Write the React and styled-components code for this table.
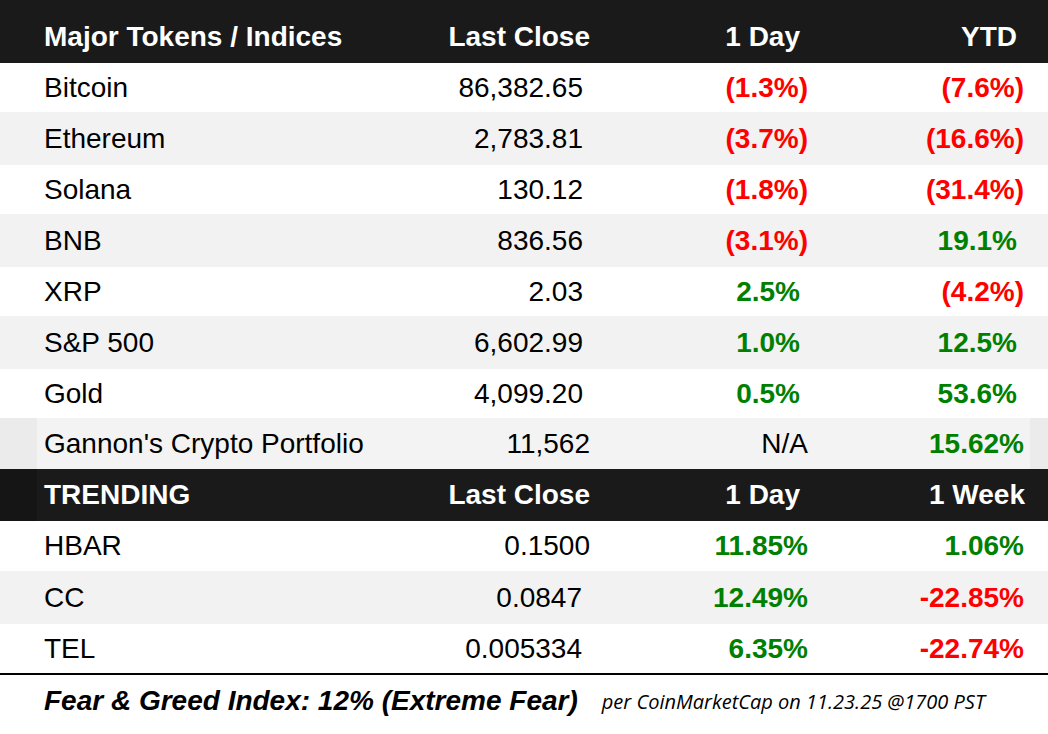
import React from "react";
import styled, { createGlobalStyle } from "styled-components";

const Global = createGlobalStyle`
  html, body { margin: 0; padding: 0; background: #ffffff; }
  body { font-family: "Liberation Sans", Arial, Helvetica, sans-serif; color: #000; }
`;

const Page = styled.div`
  width: 1048px;
  height: 734px;
  display: flex;
  flex-direction: column;
  overflow: hidden;
  background: #fff;
`;

const Row = styled.div`
  display: grid;
  grid-template-columns: 440px 160px 220px 228px;
  align-items: center;
  height: ${(p) => p.$h}px;
  font-size: 28px;
  line-height: 1;
  background: ${(p) =>
    p.$variant === "head"
      ? "#1a1a1a"
      : p.$variant === "headEdge"
      ? "linear-gradient(to right, #151515 37px, #1a1a1a 37px)"
      : p.$variant === "edge"
      ? "linear-gradient(to right, #ebebeb 37px, #f3f3f3 37px, #f3f3f3 1030px, #ebebeb 1030px)"
      : p.$variant === "grey"
      ? "#f2f2f2"
      : "#ffffff"};
  color: ${(p) => (p.$variant === "head" || p.$variant === "headEdge" ? "#fff" : "#000")};
  font-weight: ${(p) => (p.$variant === "head" || p.$variant === "headEdge" ? 700 : 400)};
  padding-top: ${(p) => p.$top || 0}px;
  box-sizing: border-box;
`;

const Name = styled.div`
  padding-left: 44px;
  white-space: nowrap;
`;

const Num = styled.div`
  text-align: right;
  padding-right: ${(p) => p.$pad}px;
  white-space: nowrap;
  color: ${(p) => (p.$tone === "red" ? "#ff0000" : p.$tone === "green" ? "#008000" : "inherit")};
  font-weight: ${(p) => (p.$tone ? 700 : "inherit")};
`;

const Rule = styled.div`
  height: 2px;
  background: #000;
`;

const Footer = styled.div`
  flex: 1;
  display: flex;
  align-items: center;
  padding-left: 44px;
  padding-bottom: 8px;
  gap: 24px;
`;

const Fear = styled.span`
  font-family: "Liberation Sans", Arial, sans-serif;
  font-weight: 700;
  font-style: italic;
  font-size: 28px;
  white-space: nowrap;
`;

const Source = styled.span`
  font-family: "Open Sans", "Liberation Sans", sans-serif;
  font-style: italic;
  font-size: 20px;
  white-space: nowrap;
  padding-top: 2px;
`;

const major = [
  { name: "Bitcoin", close: "86,382.65", day: ["(1.3%)", "red"], ytd: ["(7.6%)", "red"], h: 49 },
  { name: "Ethereum", close: "2,783.81", day: ["(3.7%)", "red"], ytd: ["(16.6%)", "red"], h: 53 },
  { name: "Solana", close: "130.12", day: ["(1.8%)", "red"], ytd: ["(31.4%)", "red"], h: 49 },
  { name: "BNB", close: "836.56", day: ["(3.1%)", "red"], ytd: ["19.1%", "green"], h: 53 },
  { name: "XRP", close: "2.03", day: ["2.5%", "green"], ytd: ["(4.2%)", "red"], h: 49 },
  { name: "S&P 500", close: "6,602.99", day: ["1.0%", "green"], ytd: ["12.5%", "green"], h: 53 },
  { name: "Gold", close: "4,099.20", day: ["0.5%", "green"], ytd: ["53.6%", "green"], h: 49 },
];

const trending = [
  { name: "HBAR", close: "0.1500", cp: 10, day: "11.85%", wk: ["1.06%", "green"], h: 50 },
  { name: "CC", close: "0.0847", cp: 18, day: "12.49%", wk: ["-22.85%", "red"], h: 53 },
  { name: "TEL", close: "0.005334", cp: 18, day: "6.35%", wk: ["-22.74%", "red"], h: 49 },
];

const padFor = (v, neg, pos) => (v.startsWith("(") ? neg : pos);

export default function App() {
  return (
    <>
      <Global />
      <Page>
        <Row $variant="head" $h={63} $top={10}>
          <Name>Major Tokens / Indices</Name>
          <Num $pad={10}>Last Close</Num>
          <Num $pad={20}>1 Day</Num>
          <Num $pad={31}>YTD</Num>
        </Row>
        {major.map((r, i) => (
          <Row key={r.name} $variant={i % 2 ? "grey" : "white"} $h={r.h}>
            <Name>{r.name}</Name>
            <Num $pad={17}>{r.close}</Num>
            <Num $pad={padFor(r.day[0], 12, 20)} $tone={r.day[1]}>{r.day[0]}</Num>
            <Num $pad={padFor(r.ytd[0], 24, 31)} $tone={r.ytd[1]}>{r.ytd[0]}</Num>
          </Row>
        ))}
        <Row $variant="edge" $h={51}>
          <Name>Gannon's Crypto Portfolio</Name>
          <Num $pad={10}>11,562</Num>
          <Num $pad={12}>N/A</Num>
          <Num $pad={24} $tone="green">15.62%</Num>
        </Row>
        <Row $variant="headEdge" $h={52}>
          <Name>TRENDING</Name>
          <Num $pad={10}>Last Close</Num>
          <Num $pad={20}>1 Day</Num>
          <Num $pad={23}>1 Week</Num>
        </Row>
        {trending.map((r, i) => (
          <Row key={r.name} $variant={i % 2 ? "grey" : "white"} $h={r.h}>
            <Name>{r.name}</Name>
            <Num $pad={r.cp}>{r.close}</Num>
            <Num $pad={12} $tone="green">{r.day}</Num>
            <Num $pad={24} $tone={r.wk[1]}>{r.wk[0]}</Num>
          </Row>
        ))}
        <Rule />
        <Footer>
          <Fear>Fear &amp; Greed Index: 12% (Extreme Fear)</Fear>
          <Source>per CoinMarketCap on 11.23.25 @1700 PST</Source>
        </Footer>
      </Page>
    </>
  );
}
